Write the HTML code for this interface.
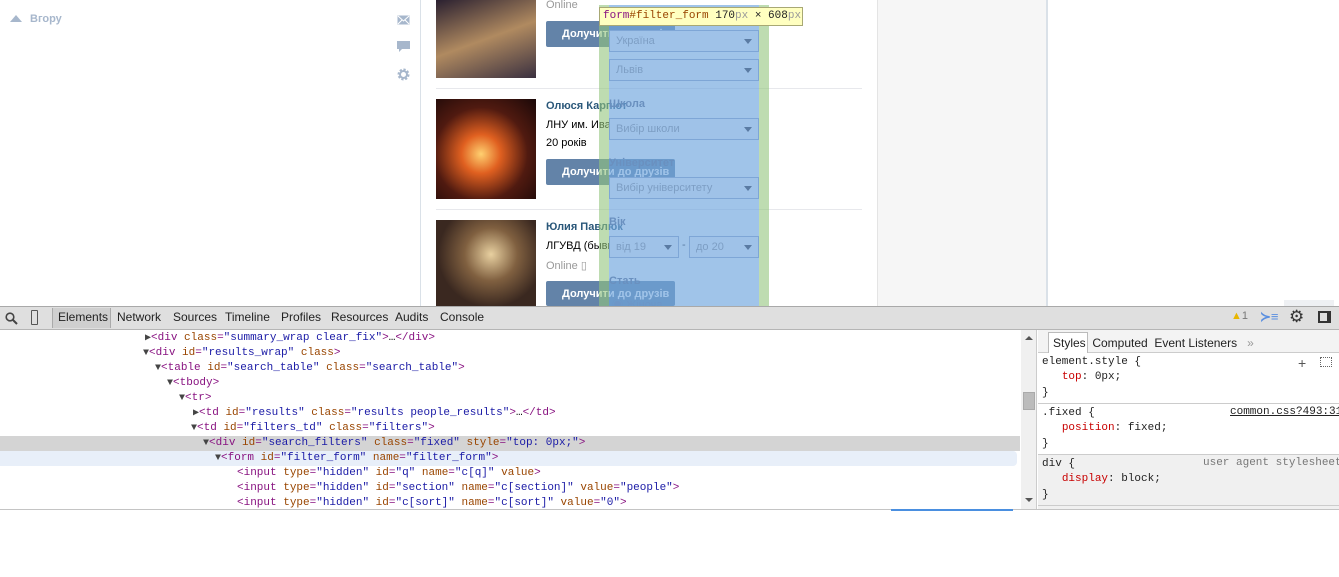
<!DOCTYPE html>
<html><head><meta charset="utf-8"><style>
*{margin:0;padding:0;box-sizing:border-box}
body{width:1339px;height:577px;overflow:hidden;background:#fff;font-family:"Liberation Sans","Noto Sans CJK SC",sans-serif;position:relative}
.a{position:absolute}
.mono{font-family:"Liberation Mono","DejaVu Sans Mono",monospace;font-size:11px}
.btn{position:absolute;left:546px;width:129px;height:26px;background:#6383a8;border-radius:2px;color:#fff;font-size:11px;font-weight:bold;line-height:26px;padding-left:16px}
.sel{position:absolute;left:609px;width:150px;height:22px;border:1px solid #7ea6d6;background:#9fc2e8;color:#7d9ec4;font-size:11px;line-height:20px;padding-left:6px}
.sel:after{content:"";position:absolute;right:6px;top:8px;border:4px solid transparent;border-top:5px solid #5a7ba3}
.lbl{position:absolute;left:609px;color:#6a90bf;font-size:11px;font-weight:bold}
.ln{position:absolute;height:15px;line-height:15px;white-space:pre}
.t{color:#881280}.n{color:#994500}.v{color:#1a1aa6}
.tri{color:#444;font-size:10px}
</style></head><body>
<div class="a" style="left:10px;top:15px;width:0;height:0;border:6px solid transparent;border-bottom:7px solid #a7b7cc;border-top:0"></div>
<div class="a" style="left:30px;top:13px;color:#a7b7cc;font-size:11px;font-weight:bold">Вгору</div>
<svg class="a" style="left:397px;top:15px" width="13" height="10"><rect x=".5" y=".5" width="12" height="9" fill="#a7b7cc"/><path d="M1 1l5.5 5 5.5-5M1 9l4-4M12 9l-4-4" stroke="#fff" fill="none"/></svg>
<svg class="a" style="left:397px;top:41px" width="13" height="12"><path d="M0 0h13v8H5l-3 3V8H0z" fill="#a7b7cc"/></svg>
<svg class="a" style="left:397px;top:68px" width="13" height="13"><circle cx="6.5" cy="6.5" r="4.5" fill="none" stroke="#a7b7cc" stroke-width="3" stroke-dasharray="2 1.5"/><circle cx="6.5" cy="6.5" r="3.5" fill="none" stroke="#a7b7cc" stroke-width="2"/></svg>
<div class="a" style="left:420px;top:0;width:1px;height:306px;background:#dae1e8"></div>
<div class="a" style="left:877px;top:0;width:171px;height:306px;background:#f6f6f6;border-left:1px solid #e4e4e4;border-right:2px solid #dae1e8"></div>
<div class="a" style="left:1284px;top:300px;width:50px;height:6px;background:#eef0f3"></div>
<div class="a" style="left:436px;top:0;width:100px;height:78px;background:linear-gradient(160deg,#2a2030,#b08a60 50%,#3a3040)"></div>
<div class="a" style="left:436px;top:99px;width:100px;height:100px;background:radial-gradient(circle at 45% 55%,#ffd070,#e06020 25%,#501a10 60%,#1a0808)"></div>
<div class="a" style="left:436px;top:220px;width:100px;height:86px;background:radial-gradient(circle at 55% 40%,#e8d0a0,#806040 35%,#3a2820 70%)"></div>
<div class="a" style="left:436px;top:88px;width:426px;height:1px;background:#e7e8ec"></div>
<div class="a" style="left:436px;top:209px;width:426px;height:1px;background:#e7e8ec"></div>
<div class="a" style="left:546px;top:-1px;color:#999;font-size:11px">Online</div>
<div class="btn" style="top:21px">Долучити до друзів</div>
<div class="a" style="left:546px;top:100px;color:#2b587a;font-size:11px;font-weight:bold">Олюся Карпют</div>
<div class="a" style="left:546px;top:119px;color:#000;font-size:11px">ЛНУ им. Ивана</div>
<div class="a" style="left:546px;top:137px;color:#000;font-size:11px">20 років</div>
<div class="btn" style="top:159px">Долучити до друзів</div>
<div class="a" style="left:546px;top:221px;color:#2b587a;font-size:11px;font-weight:bold">Юлия Павлюк</div>
<div class="a" style="left:546px;top:240px;color:#000;font-size:11px">ЛГУВД (бывш</div>
<div class="a" style="left:546px;top:259px;color:#999;font-size:11px">Online ▯</div>
<div class="btn" style="top:281px;height:25px">Долучити до друзів</div>
<div class="a" style="left:599px;top:5px;width:10px;height:301px;background:rgba(147,196,125,.6)"></div>
<div class="a" style="left:759px;top:5px;width:10px;height:301px;background:rgba(147,196,125,.6)"></div>
<div class="a" style="left:609px;top:5px;width:150px;height:301px;background:rgba(111,165,222,.66)"></div>
<div class="sel" style="top:30px">Україна</div>
<div class="sel" style="top:59px">Львів</div>
<div class="lbl" style="top:98px">Школа</div>
<div class="sel" style="top:118px">Вибір школи</div>
<div class="lbl" style="top:157px">Університет</div>
<div class="sel" style="top:177px">Вибір університету</div>
<div class="lbl" style="top:216px">Вік</div>
<div class="sel" style="top:236px;width:70px">від 19</div>
<div class="a" style="left:682px;top:239px;color:#5a7ba3;font-size:11px">-</div>
<div class="sel" style="top:236px;left:689px;width:70px">до 20</div>
<div class="lbl" style="top:275px">Стать</div>
<div class="a" style="left:612px;top:296px;color:#6d96c7;font-size:11px">◉ Жіноча</div>
<div class="a mono" style="left:599px;top:7px;height:19px;width:204px;background:#ffffc0;border:1px solid #a8a874;line-height:17px;padding-left:3px;color:#222"><span class="t">form</span><span class="n">#filter_form</span> 170<span style="color:#999">px</span> × 608<span style="color:#999">px</span></div>
<div class="a" style="left:0;top:306px;width:1339px;height:24px;background:#dfdfdf;border-top:1px solid #a9a9a9;border-bottom:1px solid #b5b5b5"></div>
<svg class="a" style="left:5px;top:312px" width="13" height="13"><circle cx="5" cy="5" r="3.8" fill="none" stroke="#444" stroke-width="1.6"/><path d="M8 8l4 4" stroke="#444" stroke-width="2"/></svg>
<div class="a" style="left:31px;top:310px;width:7px;height:15px;border:1px solid #555;border-radius:1px"></div>
<div class="a" style="left:52px;top:308px;width:59px;height:20px;background:#cfcfcf;border-left:1px solid #aaa;border-right:1px solid #aaa"></div>
<div class="a" style="left:0;top:310px;font-size:12px;color:#222;white-space:pre"><span style="position:absolute;left:58px">Elements</span><span style="position:absolute;left:117px">Network</span><span style="position:absolute;left:173px">Sources</span><span style="position:absolute;left:225px">Timeline</span><span style="position:absolute;left:281px">Profiles</span><span style="position:absolute;left:331px">Resources</span><span style="position:absolute;left:395px">Audits</span><span style="position:absolute;left:440px">Console</span></div>
<div class="a" style="left:1231px;top:310px;font-size:11px;color:#777"><span style="color:#e8b600">▲</span>1</div>
<div class="a" style="left:1260px;top:309px;font-size:13px;color:#5a8fe0;font-weight:bold">≻≡</div>
<div class="a" style="left:1289px;top:308px;font-size:17px;color:#333;line-height:18px">⚙</div>
<div class="a" style="left:1318px;top:311px;width:13px;height:12px;border:2px solid #333;border-right-width:4px"></div>
<div class="a" style="left:0;top:436px;width:1020px;height:15px;background:#d4d4d4"></div>
<div class="a" style="left:0;top:451px;width:1017px;height:15px;background:#e8eff9;border-radius:0 4px 4px 0"></div>
<div class="mono">
<div class="ln" style="left:145px;top:331px"><span class="tri">▶</span><span class="t">&lt;div</span> <span class="n">class</span><span class="t">=</span><span class="v">"summary_wrap clear_fix"</span><span class="t">&gt;</span>…<span class="t">&lt;/div&gt;</span></div>
<div class="ln" style="left:143px;top:346px"><span class="tri">▼</span><span class="t">&lt;div</span> <span class="n">id</span><span class="t">=</span><span class="v">"results_wrap"</span> <span class="n">class</span><span class="t">&gt;</span></div>
<div class="ln" style="left:155px;top:361px"><span class="tri">▼</span><span class="t">&lt;table</span> <span class="n">id</span><span class="t">=</span><span class="v">"search_table"</span> <span class="n">class</span><span class="t">=</span><span class="v">"search_table"</span><span class="t">&gt;</span></div>
<div class="ln" style="left:167px;top:376px"><span class="tri">▼</span><span class="t">&lt;tbody&gt;</span></div>
<div class="ln" style="left:179px;top:391px"><span class="tri">▼</span><span class="t">&lt;tr&gt;</span></div>
<div class="ln" style="left:193px;top:406px"><span class="tri">▶</span><span class="t">&lt;td</span> <span class="n">id</span><span class="t">=</span><span class="v">"results"</span> <span class="n">class</span><span class="t">=</span><span class="v">"results people_results"</span><span class="t">&gt;</span>…<span class="t">&lt;/td&gt;</span></div>
<div class="ln" style="left:191px;top:421px"><span class="tri">▼</span><span class="t">&lt;td</span> <span class="n">id</span><span class="t">=</span><span class="v">"filters_td"</span> <span class="n">class</span><span class="t">=</span><span class="v">"filters"</span><span class="t">&gt;</span></div>
<div class="ln" style="left:203px;top:436px"><span class="tri">▼</span><span class="t">&lt;div</span> <span class="n">id</span><span class="t">=</span><span class="v">"search_filters"</span> <span class="n">class</span><span class="t">=</span><span class="v">"fixed"</span> <span class="n">style</span><span class="t">=</span><span class="v">"top: 0px;"</span><span class="t">&gt;</span></div>
<div class="ln" style="left:215px;top:451px"><span class="tri">▼</span><span class="t">&lt;form</span> <span class="n">id</span><span class="t">=</span><span class="v">"filter_form"</span> <span class="n">name</span><span class="t">=</span><span class="v">"filter_form"</span><span class="t">&gt;</span></div>
<div class="ln" style="left:237px;top:466px"><span class="t">&lt;input</span> <span class="n">type</span><span class="t">=</span><span class="v">"hidden"</span> <span class="n">id</span><span class="t">=</span><span class="v">"q"</span> <span class="n">name</span><span class="t">=</span><span class="v">"c[q]"</span> <span class="n">value</span><span class="t">&gt;</span></div>
<div class="ln" style="left:237px;top:481px"><span class="t">&lt;input</span> <span class="n">type</span><span class="t">=</span><span class="v">"hidden"</span> <span class="n">id</span><span class="t">=</span><span class="v">"section"</span> <span class="n">name</span><span class="t">=</span><span class="v">"c[section]"</span> <span class="n">value</span><span class="t">=</span><span class="v">"people"</span><span class="t">&gt;</span></div>
<div class="ln" style="left:237px;top:496px;height:13px;overflow:hidden"><span class="t">&lt;input</span> <span class="n">type</span><span class="t">=</span><span class="v">"hidden"</span> <span class="n">id</span><span class="t">=</span><span class="v">"c[sort]"</span> <span class="n">name</span><span class="t">=</span><span class="v">"c[sort]"</span> <span class="n">value</span><span class="t">=</span><span class="v">"0"</span><span class="t">&gt;</span></div>
</div>
<div class="a" style="left:0;top:509px;width:1339px;height:1px;background:#c4c4c4"></div>
<div class="a" style="left:891px;top:509px;width:122px;height:2px;background:#4a8fe0"></div>
<div class="a" style="left:1021px;top:330px;width:16px;height:179px;background:#f0f0f0;border-right:1px solid #ccc"></div>
<div class="a" style="left:1025px;top:336px;border:4px solid transparent;border-bottom:4px solid #555;border-top:0"></div>
<div class="a" style="left:1023px;top:392px;width:12px;height:18px;background:#bcbcbc;border:1px solid #aaa"></div>
<div class="a" style="left:1025px;top:498px;border:4px solid transparent;border-top:4px solid #555;border-bottom:0"></div>
<div class="a" style="left:1038px;top:330px;width:301px;height:23px;background:#f3f3f3;border-bottom:1px solid #ccc"></div>
<div class="a" style="left:1048px;top:332px;width:40px;height:21px;background:#fff;border:1px solid #bbb;border-bottom:0"></div>
<div class="a" style="left:1053px;top:336px;font-size:12px;color:#222;white-space:pre">Styles  Computed  Event Listeners   <span style="color:#999">»</span></div>
<div class="a" style="left:1038px;top:403px;width:301px;height:1px;background:#ccc"></div>
<div class="a" style="left:1038px;top:454px;width:301px;height:55px;background:#f0f0f0;border-top:1px solid #ccc"></div>
<div class="a" style="left:1038px;top:505px;width:301px;height:1px;background:#ccc"></div>
<div class="mono a" style="left:1042px;top:355px;line-height:15.3px;white-space:pre;color:#222">element.style {
   <span style="color:#c80000">top</span>: 0px;
}</div>
<div class="a" style="left:1298px;top:355px;font-size:14px;color:#555">+</div>
<div class="a" style="left:1320px;top:357px;width:12px;height:10px;border:1px dotted #666"></div>
<div class="mono a" style="left:1042px;top:406px;line-height:15.3px;white-space:pre;color:#222">.fixed {
   <span style="color:#c80000">position</span>: fixed;
}</div>
<div class="mono a" style="left:1230px;top:406px;color:#222;text-decoration:underline;white-space:pre">common.css?493:31</div>
<div class="mono a" style="left:1042px;top:457px;line-height:15.3px;white-space:pre;color:#222">div {
   <span style="color:#c80000">display</span>: block;
}</div>
<div class="mono a" style="left:1203px;top:457px;color:#777;white-space:pre">user agent stylesheet</div>
</body></html>
